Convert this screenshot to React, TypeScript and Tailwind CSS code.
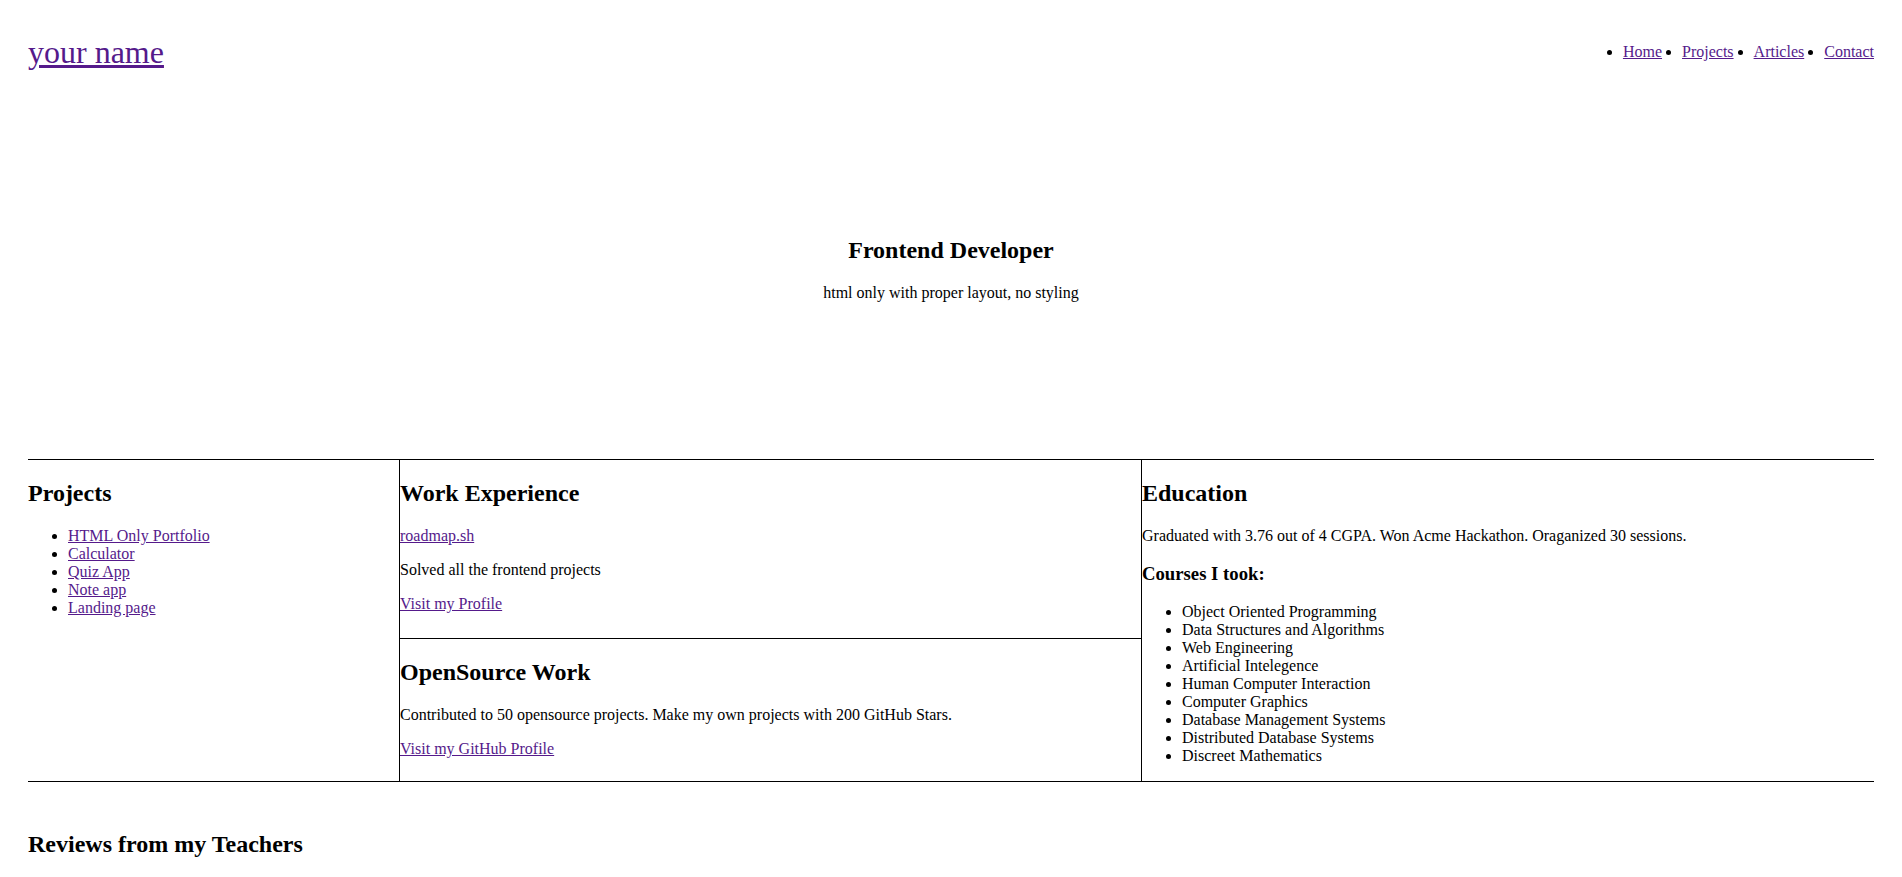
const link = "text-[#551a8b] underline";

export default function App() {
  const nav = ["Home", "Projects", "Articles", "Contact"];
  const projects = ["HTML Only Portfolio", "Calculator", "Quiz App", "Note app", "Landing page"];
  const courses = [
    "Object Oriented Programming",
    "Data Structures and Algorithms",
    "Web Engineering",
    "Artificial Intelegence",
    "Human Computer Interaction",
    "Computer Graphics",
    "Database Management Systems",
    "Distributed Database Systems",
    "Discreet Mathematics",
  ];

  return (
    <div className="min-h-screen bg-white px-[28px] font-['Liberation_Serif','Times_New_Roman',serif] text-[16px] leading-[18px] text-black">
      <header className="flex items-start justify-between pt-[34px]">
        <a href="#" className={`${link} text-[32px] leading-[37px]`}>
          your name
        </a>
        <ul className="mt-[9px] flex list-disc gap-5">
          {nav.map((item) => (
            <li key={item}>
              <a href="#" className={link}>
                {item}
              </a>
            </li>
          ))}
        </ul>
      </header>

      <section className="pt-[166px] pb-[157px] text-center">
        <h2 className="mb-[19.92px] text-[24px] font-bold leading-[27px]">Frontend Developer</h2>
        <p>html only with proper layout, no styling</p>
      </section>

      <div className="grid grid-cols-[371px_742px_1fr] border-y border-black">
        <div>
          <h2 className="my-[19.92px] text-[24px] font-bold leading-[27px]">Projects</h2>
          <ul className="my-4 list-disc pl-10">
            {projects.map((p) => (
              <li key={p}>
                <a href="#" className={link}>
                  {p}
                </a>
              </li>
            ))}
          </ul>
        </div>

        <div className="flex flex-col border-l border-black">
          <div className="h-[179px] border-b border-black">
            <h2 className="my-[19.92px] text-[24px] font-bold leading-[27px]">Work Experience</h2>
            <p className="my-4">
              <a href="#" className={link}>
                roadmap.sh
              </a>
            </p>
            <p className="my-4">Solved all the frontend projects</p>
            <p className="my-4">
              <a href="#" className={link}>
                Visit my Profile
              </a>
            </p>
          </div>
          <div className="flex-1">
            <h2 className="my-[19.92px] text-[24px] font-bold leading-[27px]">OpenSource Work</h2>
            <p className="my-4">
              Contributed to 50 opensource projects. Make my own projects with 200 GitHub Stars.
            </p>
            <p className="my-4">
              <a href="#" className={link}>
                Visit my GitHub Profile
              </a>
            </p>
          </div>
        </div>

        <div className="border-l border-black">
          <h2 className="my-[19.92px] text-[24px] font-bold leading-[27px]">Education</h2>
          <p className="my-4">
            Graduated with 3.76 out of 4 CGPA. Won Acme Hackathon. Oraganized 30 sessions.
          </p>
          <h3 className="my-[18.72px] text-[18.72px] font-bold leading-[21px]">Courses I took:</h3>
          <ul className="my-4 list-disc pl-10">
            {courses.map((c) => (
              <li key={c}>{c}</li>
            ))}
          </ul>
        </div>
      </div>

      <section className="pt-[49px]">
        <h2 className="text-[24px] font-bold leading-[27px]">Reviews from my Teachers</h2>
      </section>
    </div>
  );
}
